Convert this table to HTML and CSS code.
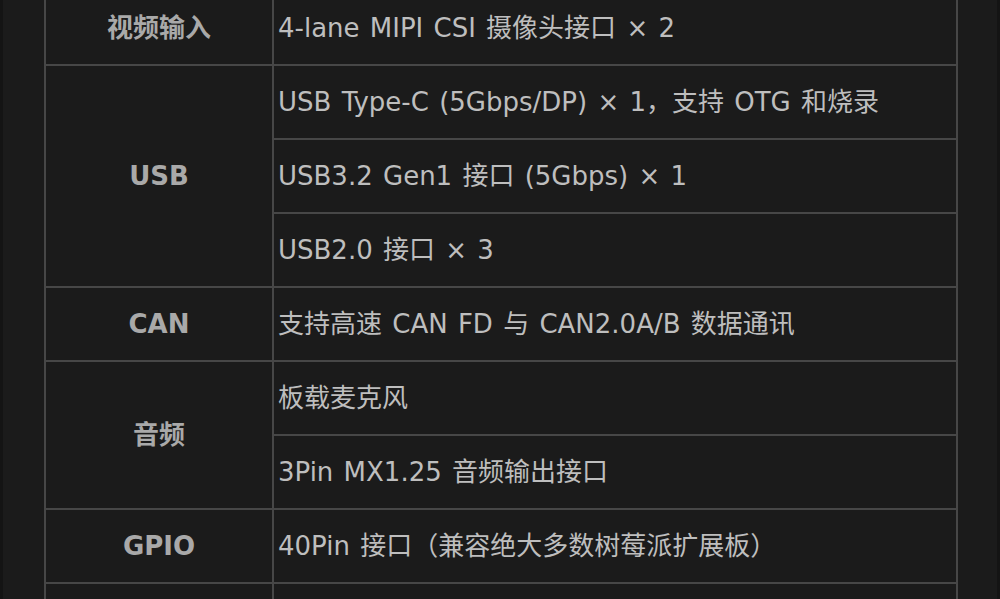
FILE: index.html
```html
<!DOCTYPE html>
<html lang="zh-CN">
<head>
<meta charset="utf-8">
<title>规格</title>
<link rel="stylesheet" href="styles.css">
</head>
<body>
<div class="page">
  <table class="spec">
    <tbody>
      <tr>
        <th>视频输入</th>
        <td>4-lane MIPI CSI 摄像头接口 × 2</td>
      </tr>
      <tr>
        <th rowspan="3">USB</th>
        <td>USB Type-C (5Gbps/DP) × 1，支持 OTG 和烧录</td>
      </tr>
      <tr>
        <td>USB3.2 Gen1 接口 (5Gbps) × 1</td>
      </tr>
      <tr>
        <td>USB2.0 接口 × 3</td>
      </tr>
      <tr>
        <th>CAN</th>
        <td>支持高速 CAN FD 与 CAN2.0A/B 数据通讯</td>
      </tr>
      <tr>
        <th rowspan="2">音频</th>
        <td>板载麦克风</td>
      </tr>
      <tr>
        <td>3Pin MX1.25 音频输出接口</td>
      </tr>
      <tr>
        <th>GPIO</th>
        <td>40Pin 接口（兼容绝大多数树莓派扩展板）</td>
      </tr>
      <tr>
        <th>&nbsp;</th>
        <td>&nbsp;</td>
      </tr>
    </tbody>
  </table>
</div>
</body>
</html>
```
FILE: styles.css
```css
html, body {
  margin: 0;
  padding: 0;
  height: 100%;
  overflow: hidden;
  background: #1b1b1b;
}

body {
  font-family: "DejaVu Sans", "Noto Sans CJK SC", sans-serif;
  border-left: 3px solid #141414;
  border-right: 3px solid #141414;
  box-sizing: border-box;
}

.page {
  padding: 0 41px;
  margin-top: -10px;
}

.spec {
  border-collapse: collapse;
  width: 914px;
  table-layout: fixed;
}

.spec th,
.spec td {
  border: 2px solid #474747;
  height: 74px;
  box-sizing: border-box;
  line-height: 34px;
}

.spec th {
  width: 228px;
  padding: 0 8px;
  text-align: center;
  font-weight: 700;
  font-size: 26px;
  color: #a9a9a9;
}

.spec td {
  padding: 0 4px;
  text-align: left;
  font-weight: 400;
  font-size: 26px;
  word-spacing: 2px;
  color: #bebebe;
}
```
